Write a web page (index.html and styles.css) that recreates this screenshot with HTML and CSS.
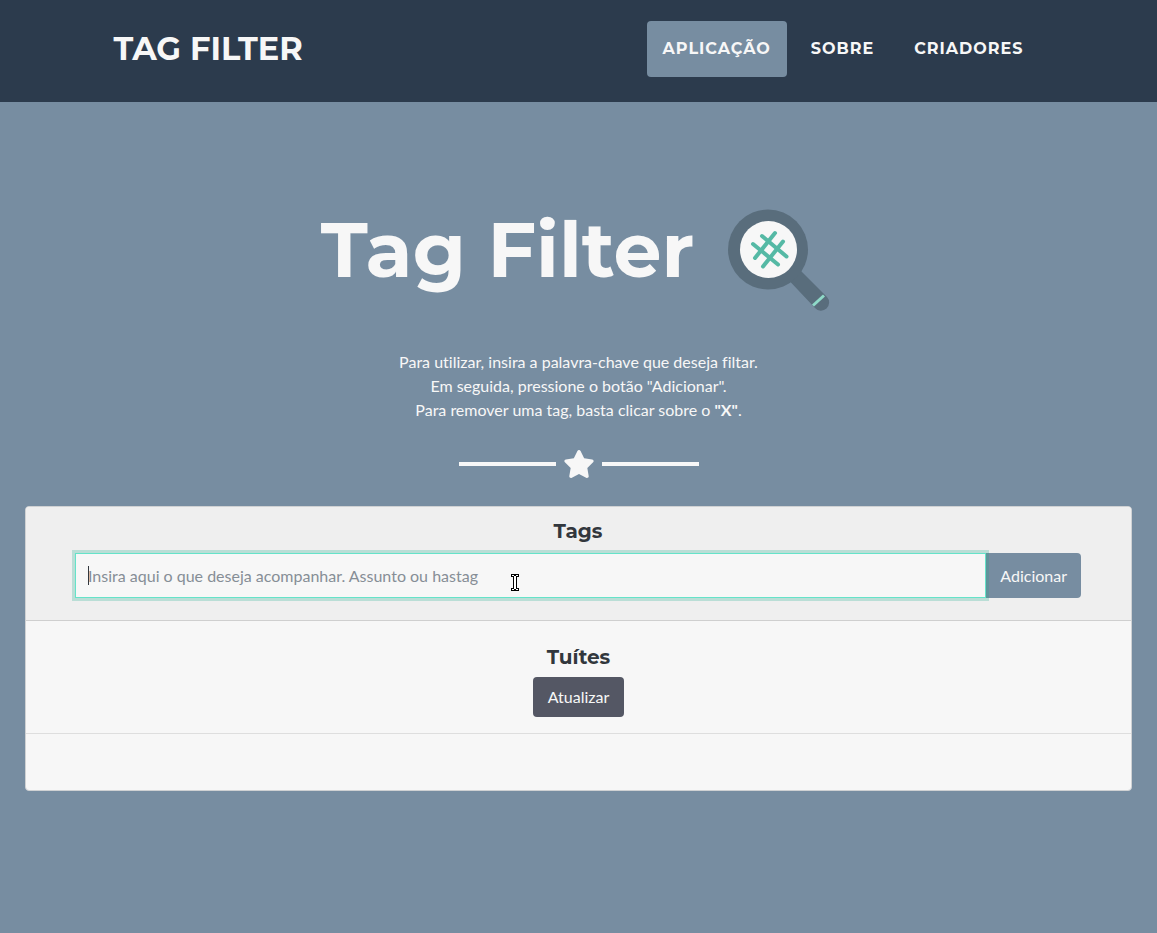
FILE: index.html
```html
<!DOCTYPE html>
<html lang="pt-BR">
<head>
  <meta charset="utf-8">
  <meta name="viewport" content="width=device-width, initial-scale=1">
  <title>Tag Filter</title>
  <link rel="stylesheet" href="styles.css">
</head>
<body>
  <nav class="navbar">
    <div class="navbar-inner">
      <a class="brand" href="#top">TAG FILTER</a>
      <div class="nav-links">
        <a class="nav-link active" href="#app">APLICAÇÃO</a>
        <a class="nav-link" href="#sobre">SOBRE</a>
        <a class="nav-link" href="#criadores">CRIADORES</a>
      </div>
    </div>
  </nav>

  <main class="page" id="top">
    <header class="hero">
      <div class="hero-heading">
        <h1 class="hero-title">Tag Filter</h1>
        <svg class="hero-logo" viewBox="0 0 102 104" aria-hidden="true">
          <path d="M62 73.500 L87 100 A7.500 7.500 0 0 0 99 89 L72 62 Z" fill="#596d7c"/>
          <circle cx="40" cy="41.500" r="40" fill="#596d7c"/>
          <circle cx="40.500" cy="41.500" r="28.500" fill="#f7f7f7"/>
          <path d="M85 97.500 L96 87.500" stroke="#8fd9c8" stroke-width="3"/>
          <g stroke="#55b9a5" stroke-width="4" stroke-linecap="round">
            <path d="M47 25 L27 50"/>
            <path d="M55 33.500 L35 58.500"/>
            <path d="M34 28 L58.500 48.500"/>
            <path d="M25 36 L50 56.500"/>
          </g>
        </svg>
      </div>
      <p class="hero-text">
        Para utilizar, insira a palavra-chave que deseja filtar.<br>
        Em seguida, pressione o botão "Adicionar".<br>
        Para remover uma tag, basta clicar sobre o <strong>"X"</strong>.
      </p>
      <div class="divider">
        <span class="divider-line"></span>
        <svg class="divider-star" viewBox="0 0 576 512" aria-hidden="true">
          <path fill="currentColor" d="M259.300 17.800L194 150.200 47.900 171.500c-26.200 3.800-36.700 36.100-17.700 54.600l105.700 103-25 145.500c-4.500 26.300 23.200 46 46.400 33.700L288 439.600l130.700 68.700c23.200 12.200 50.900-7.400 46.400-33.700l-25-145.500 105.700-103c19-18.500 8.500-50.800-17.700-54.600L382 150.200 316.700 17.800c-11.700-23.600-45.600-23.900-57.400 0z"/>
        </svg>
        <span class="divider-line"></span>
      </div>
    </header>

    <section class="card" id="app">
      <div class="card-header">
        <h2 class="card-title"><label for="tag">Tags</label></h2>
        <form class="tag-form">
          <div class="tag-field">
            <input class="tag-input" id="tag" type="text" placeholder="Insira aqui o que deseja acompanhar. Assunto ou hastag">
            <span class="caret"></span>
            <svg class="pointer" viewBox="0 0 8 17" aria-hidden="true">
              <path d="M0 0H8V3H6V14H8V17H0V14H2V3H0Z" fill="#000"/>
              <path d="M1 1H3V2H5V1H7V2H5V15H7V16H5V15H3V16H1V15H3V2H1Z" fill="#fff"/>
            </svg>
          </div>
          <button class="button button-add" type="button">Adicionar</button>
        </form>
      </div>
      <div class="card-tweets">
        <h2 class="card-title">Tuítes</h2>
        <button class="button button-refresh" type="button">Atualizar</button>
      </div>
      <div class="card-list"></div>
    </section>
  </main>
</body>
</html>
```
FILE: styles.css
```css
* {
  box-sizing: border-box;
}

body {
  margin: 0;
  min-height: 100vh;
  background: #778da1;
  color: #f7f7f7;
  font: 16px/24px Lato, sans-serif;
  font-variant-ligatures: none;
}

.navbar {
  background: #2c3b4d;
  padding: 21px 0 25px;
}

.navbar-inner {
  max-width: 960px;
  margin: 0 auto;
  padding: 0 15px;
  display: flex;
  align-items: center;
  justify-content: space-between;
}

.brand,
.nav-link {
  color: #f7f7f7;
  font-family: Montserrat, Inter, sans-serif;
  font-weight: 700;
  text-decoration: none;
}

.brand {
  font-size: 32px;
  line-height: 48px;
}

.nav-links {
  display: flex;
  gap: 8px;
  padding-right: 4px;
}

.nav-link {
  padding: 16px;
  border-radius: 4px;
  letter-spacing: 1px;
}

.nav-link.active {
  background: #778da1;
}

.page {
  padding: 96px 25px;
}

.hero {
  display: flex;
  flex-direction: column;
  align-items: center;
  text-align: center;
}

.hero-heading {
  display: flex;
  align-items: center;
  gap: 34px;
  padding: 10px 6px 0 0;
}

.hero-title {
  margin: 0;
  padding-bottom: 20px;
  font: 700 76px/84px Montserrat, Inter, sans-serif;
}

.hero-logo {
  width: 102px;
  height: 104px;
}

.hero-text {
  margin: 38px 0 28px;
}

.divider {
  display: flex;
  align-items: center;
  gap: 7px;
}

.divider-line {
  width: 97px;
  height: 4px;
  background: #f7f7f7;
}

.divider-star {
  width: 32px;
  height: 28px;
}

.card {
  margin-top: 28px;
  border: 1px solid #cfd1d3;
  border-radius: 4px;
  background: #f7f7f7;
  color: #32373d;
  text-align: center;
}

.card-header {
  padding: 12px 50px 22px 49px;
  border-bottom: 1px solid #cfcfcf;
  border-radius: 3px 3px 0 0;
  background: #efefef;
}

.card-title {
  margin: 0 0 10px;
  font: 700 20px/24px Montserrat, Inter, sans-serif;
}

.tag-form {
  display: flex;
}

.tag-field {
  position: relative;
  flex: 1;
  z-index: 1;
}

.tag-input {
  display: block;
  width: 100%;
  height: 45px;
  padding: 6px 12px;
  border: 1px solid #65e3c9;
  border-radius: 0;
  outline: none;
  background: #f7f7f7;
  box-shadow: 0 0 0 3px rgba(26, 172, 140, 0.25);
  color: #495057;
  font: inherit;
}

.tag-input::placeholder {
  color: #868e96;
  opacity: 1;
}

.caret {
  position: absolute;
  left: 13px;
  top: 13px;
  width: 1px;
  height: 19px;
  background: #32373d;
}

.pointer {
  position: absolute;
  left: 436px;
  top: 21px;
  width: 8px;
  height: 17px;
}

.button {
  border: 0;
  color: #f7f7f7;
  font: inherit;
}

.button-add {
  padding: 0 14px;
  border-radius: 0 4px 4px 0;
  background: #778da1;
}

.button-refresh {
  height: 40px;
  padding: 0 15px;
  border-radius: 4px;
  background: #545764;
}

.card-tweets {
  padding: 24px 20px 16px;
  border-bottom: 1px solid #dedede;
}

.card-tweets .card-title {
  margin-bottom: 8px;
}

.card-list {
  min-height: 56px;
}
```
